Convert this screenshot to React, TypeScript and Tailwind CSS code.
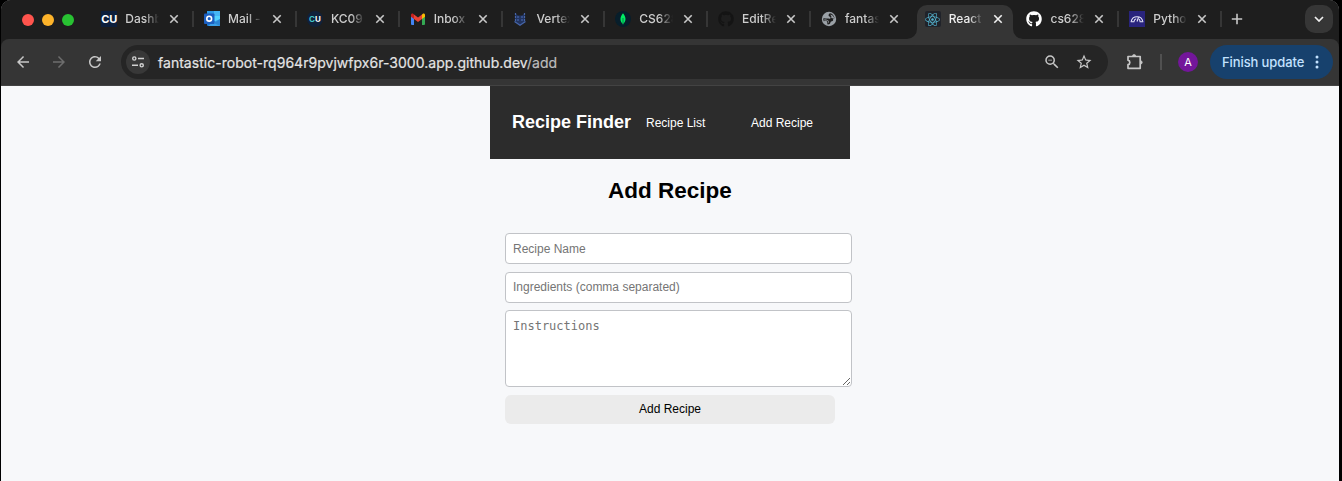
import React from "react";
import { FaReact, FaGithub } from "react-icons/fa";
import { MdZoomOut, MdStarBorder, MdRefresh, MdArrowBack, MdArrowForward } from "react-icons/md";

function OutlookIcon() {
  return (
    <svg viewBox="0 0 16 16" className="size-4">
      <rect x="3" y="0" width="13" height="15" rx="1" fill="#1976d2" />
      <rect x="3" y="0" width="7" height="5" fill="#2c9ae8" />
      <rect x="10" y="0" width="6" height="5" fill="#45b6f5" />
      <rect x="10" y="5" width="6" height="5" fill="#52d2ff" />
      <path d="M16 8v7H4l5-4z" fill="#3aa0e8" />
      <path d="M16 15V8l-6 4z" fill="#2a86d4" />
      <rect x="0" y="2.500" width="10.500" height="10.500" rx="1" fill="#1c5fc0" />
      <circle cx="5.200" cy="7.700" r="2.400" fill="none" stroke="#fff" strokeWidth="1.600" />
    </svg>
  );
}

function GmailIcon() {
  return (
    <svg viewBox="0 0 16 16" className="size-4">
      <path d="M1 4.500V13a1 1 0 0 0 1 1h2V6z" fill="#4285f4" />
      <path d="M12 14h2a1 1 0 0 0 1-1V4.500l-3 2z" fill="#34a853" />
      <path d="M12 3.600V8l3-2.200V4c0-1.500-1.600-1.900-2.400-1z" fill="#fbbc04" />
      <path d="M4 8V3.600l4 3 4-3V8l-4 3z" fill="#ea4335" />
      <path d="M1 4v1.800L4 8V3.600l-.6-.6C2.600 2.100 1 2.500 1 4z" fill="#c5221f" />
    </svg>
  );
}

function VertexIcon() {
  return (
    <svg viewBox="0 0 16 16" className="size-4">
      <path d="M3 1.800l2 2 1.500.7h3L11 3.800l2-2V11l-5 3.600L3 11z" fill="#22345f" />
      <g fill="none" stroke="#4665a8">
        <path d="M3.500 2v8M12.500 2v8M6 5v5M10 5v5" strokeWidth="1.200" strokeDasharray="2 1" />
        <path d="M2.500 10.500L8 14.200l5.500-3.700" strokeWidth="1.300" />
      </g>
    </svg>
  );
}

function MongoIcon() {
  return (
    <svg viewBox="0 0 16 16" className="size-4">
      <circle cx="8" cy="8" r="8" fill="#071e2b" />
      <path d="M8 2.200C4.600 6.200 4.700 10 8 13.300c3.300-3.300 3.400-7.100 0-11.100z" fill="#00ed64" />
      <path d="M8 7v7" stroke="#075a39" strokeWidth=".7" />
    </svg>
  );
}

function GlobeIcon() {
  return (
    <svg viewBox="0 0 16 16" className="size-4">
      <circle cx="8" cy="8" r="7.200" fill="#9aa0a6" />
      <path d="M9 2.300C7.800 3 7.200 4 7.800 5c.6.800 1.900.7 1.700 1.900-.2 1-1.600.8-2.700.7C5.400 7.500 4 7.200 2.400 7.300c-.2 1.400 0 2.100.4 3 1.300-.2 2.500-.5 3.200.3.700.9-.1 1.900.6 2.800 1.500.2 2.400-.6 2.800-1.700.3-1 .4-1.400 1.500-1.500 1.200-.1 1.500-.9 1.200-1.900-.2-.7.4-1 1.400-1C13.200 4.600 11.500 2.800 9 2.300z" fill="#1e1e1e" />
      <path d="M9.500 3.500c1.800.3 3.200 1.700 3.600 3.400-1.200.2-1.800.8-2.600 0-.6-.6.100-1.200-.3-1.900-.3-.5-.9-.7-.7-1.500zM3 8.600c1.500-.3 3.200.1 4.200 1 .7.700.6 1.600.8 2.600-.8-.3-.6-1.600-1.500-2.300-.9-.7-2.100-.3-3.200-.4z" fill="#9aa0a6" />
    </svg>
  );
}

function GaugeIcon() {
  return (
    <svg viewBox="0 0 16 16" className="size-4" fill="none" stroke="#e9e9fb" strokeWidth="1.100">
      <rect width="16" height="16" fill="#29247d" stroke="none" />
      <path d="M2.200 10.500a5.900 5.900 0 0 1 11.600 0M5 10.500a3.200 3.200 0 0 1 2.200-2.800M11 10.500a3.200 3.200 0 0 0-1-2.300M8 10.500L9.500 6.500" />
      <path d="M1.700 10.800h3.700M10.600 10.800h3.700" />
    </svg>
  );
}

const tabs: { title: string; icon: React.ReactNode; active?: boolean; sep?: boolean }[] = [
  { title: "Dashb", sep: true, icon: <span className="flex size-4 items-center justify-center bg-[#0d1f3c] text-[11px] font-bold text-white">CU</span> },
  { title: "Mail -", sep: true, icon: <OutlookIcon /> },
  { title: "KC09", sep: true, icon: <span className="flex size-4 items-center justify-center rounded-full bg-[#10213a] text-[8px] font-bold text-white"><span className="text-[#42c5c9]">C</span>U</span> },
  { title: "Inbox", sep: true, icon: <GmailIcon /> },
  { title: "Vertex", sep: true, icon: <VertexIcon /> },
  { title: "CS628", sep: true, icon: <MongoIcon /> },
  { title: "EditRe", sep: true, icon: <FaGithub className="size-4 text-[#141414]" /> },
  { title: "fantas", icon: <GlobeIcon /> },
  { title: "React", active: true, icon: <span className="flex size-4 items-center justify-center rounded-xs bg-[#20232a]"><FaReact className="size-[15px] text-[#54b5d1]" /></span> },
  { title: "cs628", sep: true, icon: <FaGithub className="size-4 text-white" /> },
  { title: "Pytho", sep: true, icon: <GaugeIcon /> },
];

function Cross({ active }: { active?: boolean }) {
  return (
    <svg viewBox="0 0 10 10" className="size-[10px] shrink-0" fill="none" stroke={active ? "#f0f0f0" : "#c8c8c8"} strokeWidth="1.600">
      <path d="M1.300 1.300l7.400 7.400M8.700 1.300L1.300 8.700" />
    </svg>
  );
}

function TabStrip() {
  return (
    <div className="flex h-[39px] shrink-0 bg-[#1e1e1e]">
      <div className="flex w-[92.300px] shrink-0 items-center gap-2 pl-[21px]">
        <span className="size-3 rounded-full bg-[#ff544d]" />
        <span className="size-3 rounded-full bg-[#fdb32a]" />
        <span className="size-3 rounded-full bg-[#28c232]" />
      </div>
      {tabs.map((t) => (
        <div key={t.title} className="flex w-[102.800px] shrink-0 pt-[5px]">
          <div className={t.active ? "relative ml-px flex h-[34px] w-24 items-center rounded-t-[10px] bg-[#353535] pb-[6px] pl-2" : "flex h-[28px] w-24 items-center pl-2"}>
            {t.active && (
              <>
                <svg viewBox="0 0 10 10" className="absolute bottom-0 -left-[10px] size-[10px]"><path d="M10 0v10H0A10 10 0 0 0 10 0z" fill="#353535" /></svg>
                <svg viewBox="0 0 10 10" className="absolute -right-[10px] bottom-0 size-[10px]"><path d="M0 0v10h10A10 10 0 0 1 0 0z" fill="#353535" /></svg>
              </>
            )}
            <span className="flex size-4 shrink-0 items-center justify-center">{t.icon}</span>
            <span className="ml-2 w-[44px] shrink-0">
              <span className={"block w-[44px] text-[12px] leading-4 font-medium whitespace-nowrap [mask-image:linear-gradient(to_right,black_20px,transparent_34px)] " + (t.active ? "text-[#ededed]" : "text-[#cdcdcd]")}>{t.title}</span>
            </span>
            <Cross active={t.active} />
          </div>
          {t.sep && <span className="mt-[6px] ml-[3px] h-4 w-[2px] bg-[#363636]" />}
        </div>
      ))}
      <svg viewBox="0 0 12 12" className="mt-[13px] ml-[7px] size-3 shrink-0" stroke="#c8c8c8" strokeWidth="1.600"><path d="M6 .8v10.400M.8 6h10.400" /></svg>
      <div className="mt-[5px] mr-[6px] ml-auto flex size-7 items-center justify-center rounded-[10px] bg-[#363636]">
        <svg viewBox="0 0 10 6" className="h-[6px] w-[10px]" fill="none" stroke="#f0f0f0" strokeWidth="1.700"><path d="M1 1l4 4 4-4" /></svg>
      </div>
    </div>
  );
}

function Toolbar() {
  return (
    <div className="flex h-[47px] shrink-0 items-center rounded-t-lg border-b border-[#434343] bg-[#353535] text-[#c7c7c7]">
      <MdArrowBack className="ml-[13px] size-[18px]" />
      <MdArrowForward className="ml-[18px] size-[18px] text-[#6d6d6d]" />
      <MdRefresh className="ml-[18px] size-[18px]" />
      <div className="ml-[17px] flex h-[34px] w-[987px] items-center rounded-full bg-[#252525] pl-[5px]">
        <span className="flex size-6 items-center justify-center rounded-full bg-[#383838]">
          <svg viewBox="0 0 14 14" className="size-[14px]" fill="none" stroke="#d2d2d2" strokeWidth="1.400">
            <circle cx="3.300" cy="3.500" r="1.600" /><path d="M7 3.500h6M1 10.300h6" /><circle cx="10.700" cy="10.300" r="1.600" />
          </svg>
        </span>
        <span className="ml-2 text-[14px] tracking-[0.03px] whitespace-nowrap text-[#e4e4e4] [-webkit-text-stroke:0.2px]">fantastic-robot-rq964r9pvjwfpx6r-3000.app.github.dev<span className="text-[#bdbdbd]">/add</span></span>
        <MdZoomOut className="ml-auto size-[18px]" />
        <MdStarBorder className="mr-[15px] ml-[14px] size-[18px]" />
      </div>
      <svg viewBox="0 0 18 18" className="ml-[18px] size-[18px]" fill="none" stroke="#c7c7c7" strokeWidth="1.700" strokeLinejoin="round">
        <path d="M2 3.500h12.200v11.800H2v-3.600a2.300 2.300 0 0 0 0-4.500z" />
        <path d="M6.500 3a1.600 1.600 0 0 1 3.200 0zM14.700 7.800a1.600 1.600 0 0 1 0 3.200z" fill="#c7c7c7" strokeWidth=".6" />
      </svg>
      <span className="ml-4 h-4 w-[2px] bg-[#515151]" />
      <span className="ml-4 flex size-5 items-center justify-center rounded-full bg-[#73169a] text-[11px] text-white">A</span>
      <div className="mr-[6px] ml-auto flex h-[34px] w-[123px] items-center rounded-full bg-[#17416d] pl-3 text-[13px] font-medium text-[#c3e2ff]">
        <span className="pt-px tracking-[-0.1px] whitespace-nowrap">Finish update</span>
        <svg viewBox="0 0 4 16" className="mr-[14px] ml-auto h-4 w-1" fill="#c3e2ff"><circle cx="2" cy="3" r="1.500" /><circle cx="2" cy="8" r="1.500" /><circle cx="2" cy="13" r="1.500" /></svg>
      </div>
    </div>
  );
}

export default function App() {
  return (
    <div className="h-[481px] w-[1342px] overflow-hidden bg-black pr-[3px] pl-px">
      <div className="flex h-full flex-col overflow-hidden rounded-t-[10px] bg-[#f7f8fa]">
        <div className="flex flex-col bg-[#1e1e1e] font-['Inter',sans-serif]">
          <TabStrip />
          <Toolbar />
        </div>
        <main className="ml-[489px] w-[362px] font-['Liberation_Sans',sans-serif] text-black">
          <nav className="flex h-[73px] w-[360px] items-center bg-[#2c2c2c] pl-[22px] text-white">
            <span className="w-[134px] text-[18px] font-bold whitespace-nowrap">Recipe Finder</span>
            <a className="w-[105px] text-[12px]">Recipe List</a>
            <a className="text-[12px]">Add Recipe</a>
          </nav>
          <h1 className="mt-[18px] w-[360px] text-center text-[22.500px] leading-7 font-bold">Add Recipe</h1>
          <form className="mt-[28px] ml-[15px] flex flex-col text-[12px]">
            <input placeholder="Recipe Name" className="h-[31px] w-[347px] rounded-[4px] border border-[#c1c3c7] bg-white px-[7px] placeholder:text-[#757575]" />
            <input placeholder="Ingredients (comma separated)" className="mt-2 h-[31px] w-[347px] rounded-[4px] border border-[#c1c3c7] bg-white px-[7px] pb-[2px] placeholder:text-[#757575]" />
            <textarea placeholder="Instructions" className="mt-[7px] h-[77px] w-[347px] resize rounded-[4px] border border-[#c1c3c7] bg-white px-[7px] py-[6px] font-['DejaVu_Sans_Mono',monospace] placeholder:text-[#757575]" />
            <button type="button" className="mt-2 h-[29px] w-[330px] rounded-[6px] bg-[#ebebeb] pb-[2px]">Add Recipe</button>
          </form>
        </main>
      </div>
    </div>
  );
}
